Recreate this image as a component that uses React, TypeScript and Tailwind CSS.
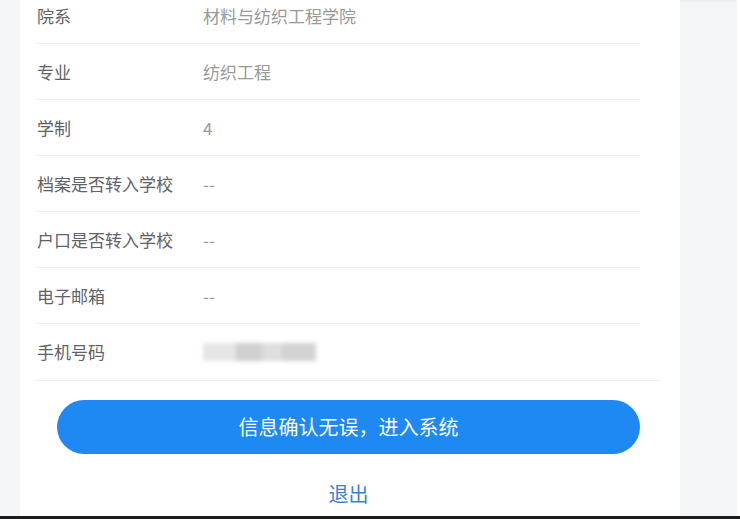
import React from "react";

const font = { fontFamily: '"Noto Sans CJK SC", "Noto Sans", sans-serif' };

const InfoConfirm: React.FC = () => {
  const rows = [
    { label: "院系", value: "材料与纺织工程学院" },
    { label: "专业", value: "纺织工程" },
    { label: "学制", value: "4" },
    { label: "档案是否转入学校", value: "--" },
    { label: "户口是否转入学校", value: "--" },
    { label: "电子邮箱", value: "--" },
    { label: "手机号码", value: "", blur: true },
  ];

  return (
    <div
      className="w-[740px] h-[519px] overflow-hidden flex flex-col bg-[#f4f5f7]"
      style={font}
    >
      <div className="flex h-[516px]">
        <div className="w-[20px] bg-[#f5f6f8]"></div>

        <div className="w-[660px] bg-white overflow-hidden">
          <div className="-mt-[12px] ml-[17px] w-[603px]">
            {rows.map((row, index) => (
              <div
                key={index}
                className={`h-[56px] flex items-center ${
                  index < rows.length - 1 ? "border-b border-[#f1f1f1]" : ""
                }`}
              >
                <div className="w-[166px] text-[17px] text-[#5f6266]">
                  {row.label}
                </div>
                {row.blur ? (
                  // masked phone number
                  <div className="flex h-[18px] w-[113px] blur-[2px]">
                    <div className="w-[33px] bg-[#e6e6e6]"></div>
                    <div className="w-[26px] bg-[#cfcfcf]"></div>
                    <div className="w-[20px] bg-[#dedede]"></div>
                    <div className="w-[34px] bg-[#d3d3d3]"></div>
                  </div>
                ) : (
                  <div className="text-[17px] text-[#999999]">{row.value}</div>
                )}
              </div>
            ))}
          </div>
          <div className="ml-[13px] w-[627px] h-px bg-[#f1f1f1]"></div>

          <div className="ml-[37px] w-[583px]">
            <button className="mt-[19px] w-full h-[54px] rounded-full bg-[#1e88f3] text-white text-[20px] flex items-center justify-center">
              信息确认无误，进入系统
            </button>
            <div className="mt-[26px] text-center text-[20px] leading-[28px] text-[#3b7fd8]">
              退出
            </div>
          </div>
        </div>

        <div className="w-[57px] bg-[#f4f5f7] border-t-2 border-[#eceef1]"></div>
        <div className="flex-1 bg-white"></div>
      </div>
      <div className="h-[3px] bg-[#1c1c1c]"></div>
    </div>
  );
};

export default function App() {
  return <InfoConfirm />;
}
